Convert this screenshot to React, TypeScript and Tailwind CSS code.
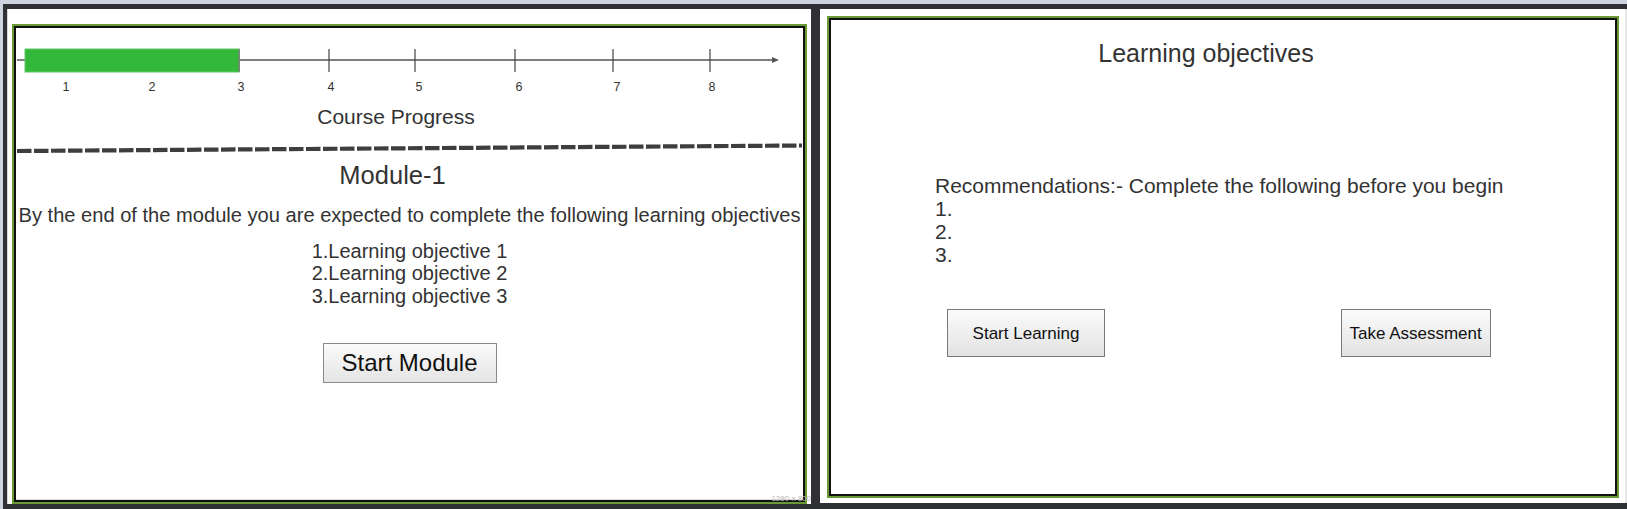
import React from "react";

const ticks = [51, 133, 223, 313, 399, 499, 597, 694];
const labels = [50, 136, 225, 315, 403, 503, 601, 696];

function Timeline() {
  return (
    <svg width="787" height="70" viewBox="0 0 787 70" className="block">
      <line x1="1" y1="32" x2="757" y2="32" stroke="#555" strokeWidth="1.3" />
      <polygon points="756,29 763,32 756,35" fill="#555" />
      {ticks.map((x) => (
        <line key={x} x1={x} y1="21" x2={x} y2="44" stroke="#444" strokeWidth="1.2" />
      ))}
      <rect x="9" y="21" width="214" height="23" fill="#34b83a" stroke="#5fc864" strokeWidth="1" />
      <line x1="223" y1="21" x2="223" y2="44" stroke="#777" strokeWidth="1.2" />
      {labels.map((x, i) => (
        <text
          key={x}
          x={x}
          y="62.5"
          textAnchor="middle"
          fontSize="12.5"
          fill="#333"
          fontFamily="'Liberation Sans', Arial, sans-serif"
        >
          {i + 1}
        </text>
      ))}
    </svg>
  );
}

function DashedRule() {
  return (
    <svg width="787" height="12" viewBox="0 0 787 12" className="block">
      <line x1="1" y1="9" x2="786" y2="3.5" stroke="#3e3e3e" strokeWidth="4.2" strokeDasharray="14.5 2.5" />
    </svg>
  );
}

export default function App() {
  return (
    <div
      className="w-[1627px] h-[509px] bg-[#cdd4df] pl-[3px] pt-[4px] overflow-hidden text-[#333]"
      style={{ fontFamily: "'Liberation Sans', Arial, sans-serif" }}
    >
      <div className="h-[505px] bg-[#2f3135] flex items-start pt-[5px] pl-[4px] gap-[9px]">
        {/* Left panel */}
        <div className="relative w-[804px] h-[495px] bg-white border-l border-[#d8d8d8] pl-[4px] pt-[15px]">
          <div className="w-[795px] h-[480px] border-2 border-[#6a9a36]">
            <div className="h-full border-2 border-[#111] bg-white">
              <div className="h-full border-b border-[#dedede] flex flex-col">
                <Timeline />
                <div className="mt-[7px] pr-[27px] text-center text-[21px] leading-[24px]">Course Progress</div>
                <div className="mt-[13px]">
                  <DashedRule />
                </div>
                <div className="mt-[7px] pr-[34px] text-center text-[25.5px] leading-[28.5px]">Module-1</div>
                <div className="mt-[14.5px] text-center text-[20.1px] leading-[23px] whitespace-nowrap">
                  By the end of the module you are expected to complete the following learning objectives
                </div>
                <div className="mt-[12.5px] text-center text-[20px] leading-[22.5px]">
                  <div>1.Learning objective 1</div>
                  <div>2.Learning objective 2</div>
                  <div>3.Learning objective 3</div>
                </div>
                <div className="mt-[35.5px] flex justify-center">
                  <button className="w-[174px] h-[40px] border border-[#8a8a8a] bg-gradient-to-b from-[#fbfbfb] to-[#e4e4e4] text-[24px] leading-none text-[#111]">
                    Start Module
                  </button>
                </div>
              </div>
            </div>
          </div>
          <span className="absolute right-[0px] bottom-[1px] text-[8px] leading-none text-[#b8b8b8]">1280 x 800</span>
        </div>

        {/* Right panel */}
        <div className="w-[807px] h-[494px] bg-white border-r-2 border-[#e6e6e6] pl-[7px] pt-[7px]">
          <div className="w-[792px] h-[482px] border-2 border-[#6a9a36]">
            <div className="h-full border-2 border-[#111] bg-white flex flex-col">
              <div className="mt-[18.5px] pr-[34px] text-center text-[25px] leading-[28.75px]">Learning objectives</div>
              <div className="mt-[106.3px] pl-[104px] text-[21px] leading-[23.2px]">
                <div>Recommendations:- Complete the following before you begin</div>
                <div>1.</div>
                <div>2.</div>
                <div>3.</div>
              </div>
              <div className="mt-[43px] ml-[116px] flex gap-[235.6px]">
                <button className="w-[158px] h-[48px] border border-[#7a7a7a] bg-gradient-to-b from-[#fbfbfb] to-[#e2e2e2] text-[17px] text-[#111]">
                  Start Learning
                </button>
                <button className="w-[150px] h-[48px] border border-[#7a7a7a] bg-gradient-to-b from-[#fbfbfb] to-[#e2e2e2] text-[17px] text-[#111]">
                  Take Assessment
                </button>
              </div>
            </div>
          </div>
        </div>
      </div>
    </div>
  );
}
